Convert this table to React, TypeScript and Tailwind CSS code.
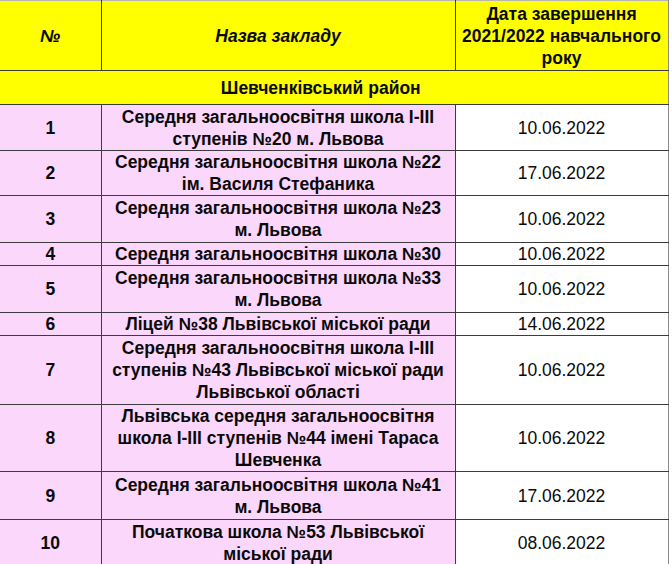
import React from "react";

const rows: { n: string; name: string[]; date: string; h: number }[] = [
  { n: "1", name: ["Середня загальноосвітня школа І-ІІІ", "ступенів №20 м. Львова"], date: "10.06.2022", h: 46 },
  { n: "2", name: ["Середня загальноосвітня школа №22", "ім. Василя Стефаника"], date: "17.06.2022", h: 45 },
  { n: "3", name: ["Середня загальноосвітня школа №23", "м. Львова"], date: "10.06.2022", h: 47 },
  { n: "4", name: ["Середня загальноосвітня школа №30"], date: "10.06.2022", h: 23 },
  { n: "5", name: ["Середня загальноосвітня школа №33", "м. Львова"], date: "10.06.2022", h: 47 },
  { n: "6", name: ["Ліцей №38 Львівської міської ради"], date: "14.06.2022", h: 22 },
  { n: "7", name: ["Середня загальноосвітня школа І-ІІІ", "ступенів №43 Львівської міської ради", "Львівської області"], date: "10.06.2022", h: 69 },
  { n: "8", name: ["Львівська середня загальноосвітня", "школа І-ІІІ ступенів №44 імені Тараса", "Шевченка"], date: "10.06.2022", h: 66 },
  { n: "9", name: ["Середня загальноосвітня школа №41", "м. Львова"], date: "17.06.2022", h: 48 },
  { n: "10", name: ["Початкова школа №53 Львівської", "міської ради"], date: "08.06.2022", h: 47 },
];

export default function App() {
  return (
    <div className="w-[672px] h-[564px] overflow-hidden bg-white" style={{ fontFamily: '"Liberation Sans", Arial, sans-serif' }}>
      <table className="border-collapse w-[668px] table-fixed text-[17.5px] leading-[22px] text-[#0a0a0a]">
        <colgroup>
          <col className="w-[101px]" />
          <col className="w-[354px]" />
          <col className="w-[213px]" />
        </colgroup>
        <tbody>
          <tr className="h-[70px] bg-[#ffff00]">
            <td className="p-0 border-r border-b border-t border-t-[#b5b5b5] border-[#3c3c3c] text-center font-bold italic">№</td>
            <td className="p-0 border-r border-b border-t border-t-[#b5b5b5] border-[#3c3c3c] text-center font-bold italic">Назва закладу</td>
            <td className="p-0 border-r border-b border-t border-t-[#b5b5b5] border-[#3c3c3c] border-r-[#8a8a8a] text-center font-bold">
              Дата завершення
              <br />
              2021/2022 навчального
              <br />
              року
            </td>
          </tr>
          <tr className="h-[34px] bg-[#ffff00]">
            <td colSpan={3} className="p-0 border-b border-r border-[#3c3c3c] border-r-[#8a8a8a] text-center font-bold pr-[26px]">
              Шевченківський район
            </td>
          </tr>
          {rows.map((r) => (
            <tr key={r.n} style={{ height: r.h }}>
              <td className="p-0 bg-[#fbd7fb] border-r border-b border-[#3c3c3c] text-center font-bold">{r.n}</td>
              <td className="p-0 bg-[#fbd7fb] border-r border-b border-[#3c3c3c] text-center font-bold">
                {r.name.map((l, i) => (
                  <div key={i}>{l}</div>
                ))}
              </td>
              <td className="p-0 bg-white border-r border-b border-[#3c3c3c] border-r-[#8a8a8a] text-center">{r.date}</td>
            </tr>
          ))}
        </tbody>
      </table>
    </div>
  );
}
